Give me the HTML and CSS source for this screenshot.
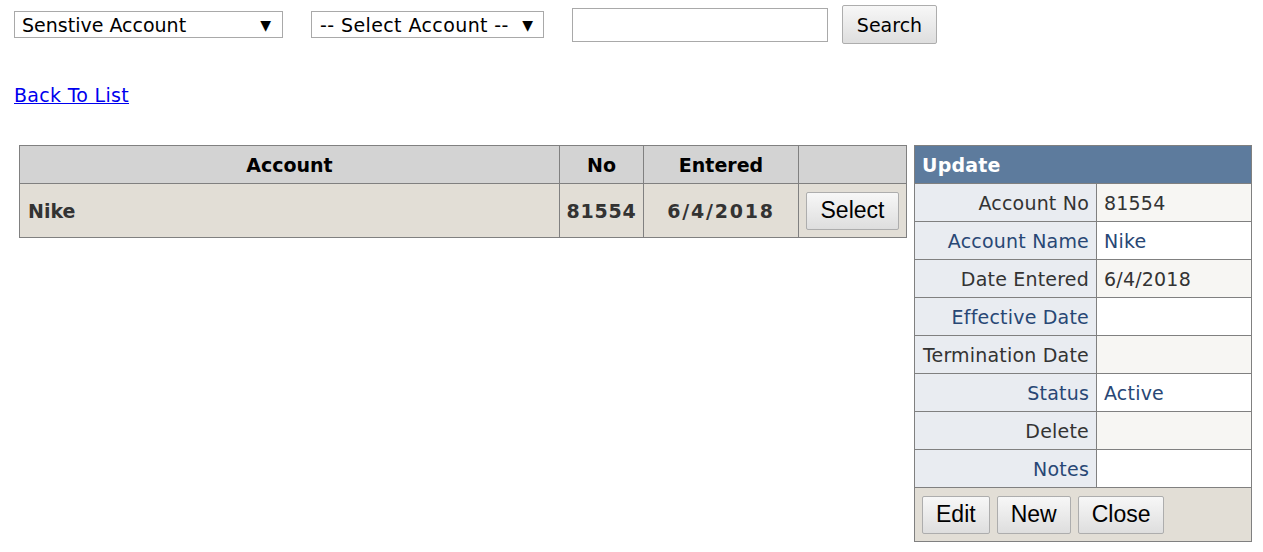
FILE: index.html
```html
<!DOCTYPE html>
<html>
<head>
<meta charset="utf-8">
<link rel="stylesheet" href="styles.css">
</head>
<body>
<div class="page">
  <div class="toolbar">
    <div class="dropdown dd-type"><span>Senstive Account</span><span class="arrow">▼</span></div>
    <div class="dropdown dd-account"><span class="wide">-- Select Account --</span><span class="arrow">▼</span></div>
    <input class="search-input" type="text">
    <button class="btn btn-search">Search</button>
  </div>
  <div class="backlink"><a href="#">Back To List</a></div>
  <div class="content">
    <table class="grid">
      <colgroup>
        <col class="c-account">
        <col class="c-no">
        <col class="c-entered">
        <col class="c-action">
      </colgroup>
      <thead>
        <tr>
          <th>Account</th>
          <th>No</th>
          <th>Entered</th>
          <th></th>
        </tr>
      </thead>
      <tbody>
        <tr>
          <td class="left">Nike</td>
          <td class="center num">81554</td>
          <td class="center date">6/4/2018</td>
          <td class="action"><button class="btn btn-arial">Select</button></td>
        </tr>
      </tbody>
    </table>
    <table class="details">
      <colgroup>
        <col class="d-label">
        <col class="d-value">
      </colgroup>
      <tr class="head"><td colspan="2">Update</td></tr>
      <tr class="row"><td class="label">Account No</td><td class="value">81554</td></tr>
      <tr class="alt"><td class="label">Account Name</td><td class="value">Nike</td></tr>
      <tr class="row"><td class="label">Date Entered</td><td class="value">6/4/2018</td></tr>
      <tr class="alt"><td class="label">Effective Date</td><td class="value"></td></tr>
      <tr class="row"><td class="label">Termination Date</td><td class="value"></td></tr>
      <tr class="alt"><td class="label">Status</td><td class="value">Active</td></tr>
      <tr class="row"><td class="label">Delete</td><td class="value"></td></tr>
      <tr class="alt"><td class="label">Notes</td><td class="value"></td></tr>
      <tr class="command"><td colspan="2">
        <div class="cmd-buttons">
          <button class="btn btn-arial">Edit</button>
          <button class="btn btn-arial">New</button>
          <button class="btn btn-arial">Close</button>
        </div>
      </td></tr>
    </table>
  </div>
</div>
</body>
</html>
```
FILE: styles.css
```css
html, body {
  margin: 0;
  padding: 0;
  background: #fff;
}
body {
  font-family: "DejaVu Sans", Verdana, sans-serif;
  color: #000;
}
.page {
  padding: 5px 0 0 14px;
}
.toolbar {
  display: flex;
  align-items: center;
  height: 39px;
}
.dropdown {
  box-sizing: border-box;
  height: 27px;
  border: 1px solid #a9a9a9;
  display: flex;
  align-items: center;
  justify-content: space-between;
  font-size: 19px;
  color: #000;
  background: #fff;
  white-space: nowrap;
}
.dropdown .arrow {
  font-size: 14px;
  letter-spacing: 0;
}
.dropdown .wide {
  letter-spacing: 0.4px;
}
.dd-type {
  width: 269px;
  padding: 0 11px 0 7px;
}
.dd-account {
  width: 233px;
  margin-left: 28px;
  padding: 0 10px 0 8px;
}
.search-input {
  box-sizing: border-box;
  width: 256px;
  height: 34px;
  margin: 0 0 0 28px;
  border: 1px solid #a9a9a9;
  padding: 0 4px;
  font-size: 18px;
}
.btn {
  box-sizing: border-box;
  border: 1px solid #adadad;
  border-radius: 2px;
  background: linear-gradient(#f7f7f7, #dedede);
  color: #000;
  margin: 0;
  cursor: pointer;
}
.btn-search {
  width: 95px;
  height: 39px;
  margin-left: 14px;
  font-family: "DejaVu Sans", Verdana, sans-serif;
  font-size: 19px;
  padding: 0;
}
.btn-arial {
  height: 38px;
  font-family: "Liberation Sans", Arial, sans-serif;
  font-size: 23px;
  padding: 0 13px;
}
.backlink {
  margin-top: 40px;
  height: 22px;
  font-size: 19px;
  line-height: 22px;
  letter-spacing: 0.3px;
}
.backlink a {
  color: #0000ee;
  text-decoration: underline;
}
.content {
  display: flex;
  align-items: flex-start;
  gap: 7px;
  margin-top: 39px;
  margin-left: 5px;
}
.grid {
  border-collapse: collapse;
  table-layout: fixed;
  width: 887px;
  font-size: 19px;
  border: 1px solid #808080;
}
.grid .c-account { width: 540px; }
.grid .c-no { width: 84px; }
.grid .c-entered { width: 155px; }
.grid .c-action { width: 108px; }
.grid th, .grid td {
  border: 1px solid #808080;
  padding: 0 8px;
  white-space: nowrap;
}
.grid th {
  background: #d3d3d3;
  height: 37px;
  font-weight: bold;
  text-align: center;
  color: #000;
}
.grid td {
  background: #e2ded6;
  color: #333;
  font-weight: bold;
  height: 53px;
}
.grid td.left { text-align: left; }
.grid td.center { text-align: center; padding: 0 4px; }
.grid td.num { letter-spacing: 0.8px; }
.grid td.date { letter-spacing: 1.8px; }
.grid td.action {
  padding: 0 7px;
  text-align: left;
  letter-spacing: 0;
}
.grid td.action .btn {
  width: 93px;
  padding: 0;
}
.details {
  border-collapse: collapse;
  table-layout: fixed;
  width: 337px;
  font-size: 19px;
  border: 1px solid #808080;
  letter-spacing: 0.2px;
}
.details .d-label { width: 182px; }
.details .d-value { width: 155px; }
.details td {
  border: 1px solid #808080;
  height: 37px;
  padding: 0 7px 0 7px;
  white-space: nowrap;
}
.details .head td {
  background: #5d7b9d;
  color: #fff;
  font-weight: bold;
  padding-left: 7px;
}
.details .label {
  text-align: right;
  background: #e9ecf1;
}
.details .value {
  text-align: left;
}
.details .row td {
  color: #333;
}
.details .row .value {
  background: #f7f6f3;
}
.details .alt td {
  color: #284775;
}
.details .alt .value {
  background: #fff;
}
.details .command td {
  background: #e2ded6;
  height: 53px;
  padding: 0 7px;
  letter-spacing: 0;
}
.cmd-buttons {
  display: flex;
  gap: 7px;
}
```
